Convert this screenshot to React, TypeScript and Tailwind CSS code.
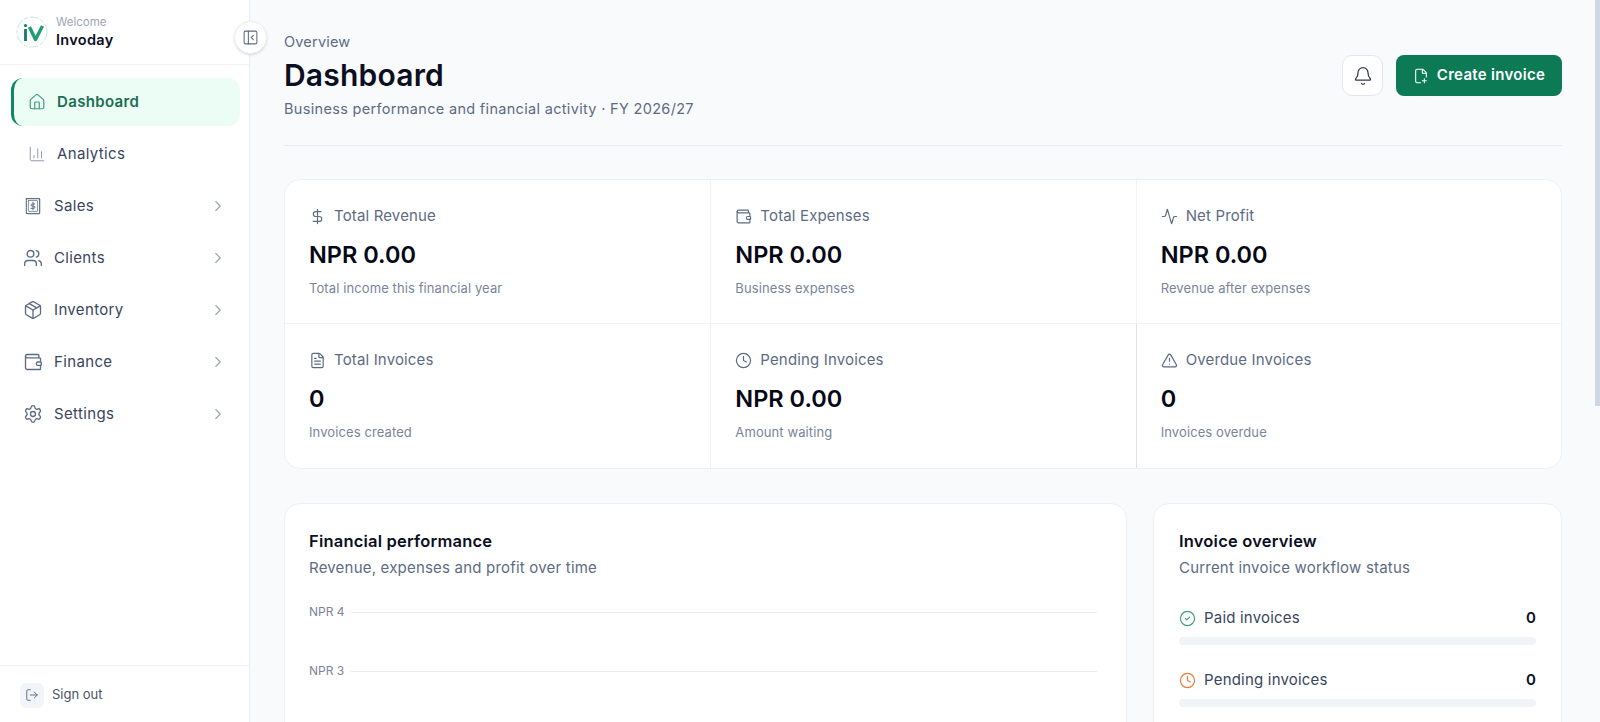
import React from "react";
import {
  Activity,
  Bell,
  ChartColumn,
  ChevronRight,
  CircleCheck,
  Clock,
  DollarSign,
  FilePlusCorner,
  FileText,
  House,
  LogOut,
  Package,
  PanelLeftClose,
  Settings,
  TriangleAlert,
  Users,
  Wallet,
} from "lucide-react";

const SalesIcon = () => (
  <svg width="20" height="20" viewBox="0 0 24 24" fill="none" stroke="currentColor" strokeWidth="1.5" strokeLinecap="round" strokeLinejoin="round">
    <rect x="4" y="3" width="16" height="18" rx="0.5" strokeDasharray="1.6 1.1" />
    <rect x="6.5" y="5.5" width="11" height="13" rx="0.5" strokeWidth="0.9" />
    <path strokeWidth="1.2" d="M12 7.5v9M14.2 9.6h-3.2a1.3 1.3 0 0 0 0 2.6h2a1.3 1.3 0 0 1 0 2.6H9.6" />
  </svg>
);

const Logo = () => (
  <svg width="32" height="32" viewBox="0 0 32 32" fill="none">
    <circle cx="16" cy="16" r="15" stroke="#b5e0d0" strokeWidth="0.8" strokeDasharray="9 2 4 2" />
    <circle cx="9.5" cy="9.5" r="1.6" fill="#0f7a6a" />
    <path d="M9.5 13v12" stroke="#0f7a6a" strokeWidth="2.8" />
    <path d="M13.5 11l6 12.5 7-13.5" stroke="#1f9f70" strokeWidth="3.4" strokeLinejoin="round" />
  </svg>
);

const navItems = [
  { label: "Sales", icon: <SalesIcon /> },
  { label: "Clients", icon: <Users size={20} strokeWidth={1.6} /> },
  { label: "Inventory", icon: <Package size={20} strokeWidth={1.6} /> },
  { label: "Finance", icon: <Wallet size={20} strokeWidth={1.6} /> },
  { label: "Settings", icon: <Settings size={20} strokeWidth={1.6} /> },
];

const stats = [
  { label: "Total Revenue", value: "NPR 0.00", note: "Total income this financial year", icon: <DollarSign size={17} strokeWidth={1.7} /> },
  { label: "Total Expenses", value: "NPR 0.00", note: "Business expenses", icon: <Wallet size={17} strokeWidth={1.7} /> },
  { label: "Net Profit", value: "NPR 0.00", note: "Revenue after expenses", icon: <Activity size={17} strokeWidth={1.7} /> },
  { label: "Total Invoices", value: "0", note: "Invoices created", icon: <FileText size={17} strokeWidth={1.7} /> },
  { label: "Pending Invoices", value: "NPR 0.00", note: "Amount waiting", icon: <Clock size={17} strokeWidth={1.7} /> },
  { label: "Overdue Invoices", value: "0", note: "Invoices overdue", icon: <TriangleAlert size={17} strokeWidth={1.7} /> },
];

const statuses = [
  { label: "Paid invoices", icon: <CircleCheck size={17} strokeWidth={1.7} className="text-[#3f9f7a]" /> },
  { label: "Pending invoices", icon: <Clock size={17} strokeWidth={1.7} className="text-[#ea7b3c]" /> },
];

export default function App() {
  return (
    <div className="flex h-[722px] overflow-hidden bg-[#f9fafc] font-['Inter','Liberation_Sans',sans-serif] text-[#3a4560]">
      {/* Sidebar */}
      <aside className="relative flex w-[250px] shrink-0 flex-col border-r border-[#eceef2] bg-white">
        <div className="flex h-[65px] shrink-0 items-center gap-[8px] border-b border-[#f1f2f5] pl-[16px]">
          <Logo />
          <div className="flex flex-col">
            <span className="text-[11.5px] leading-[16px] text-[#a0a5bd]">Welcome</span>
            <span className="text-[14.5px] leading-[20px] font-semibold tracking-[0.3px] text-[#0b0f1f]">Invoday</span>
          </div>
        </div>
        <button className="absolute top-[21px] left-[234px] z-10 flex h-[33px] w-[33px] items-center justify-center rounded-full border border-[#eceef2] bg-white text-[#5d6b85] shadow-sm">
          <PanelLeftClose size={17} strokeWidth={1.5} />
        </button>

        <nav className="flex flex-1 flex-col gap-[4px] pt-[13px] pr-[9px] pl-[11px]">
          <div className="flex h-[48px] items-center gap-[11px] rounded-xl border-l-[3px] border-[#0f8a60] bg-[#ecfdf5] pl-[14px] text-[15px] font-semibold tracking-[0.35px] text-[#1c6e52]">
            <House size={18} strokeWidth={1.6} className="text-[#3f9f7a]" />
            Dashboard
          </div>
          <div className="flex h-[48px] items-center gap-[11px] pl-[17px] text-[15px] tracking-[0.35px] text-[#3a4560]">
            <ChartColumn size={18} strokeWidth={1.3} className="text-[#8f97b0]" />
            Analytics
          </div>
          {navItems.map((item) => (
            <div key={item.label} className="flex h-[48px] items-center gap-[11px] pr-[13px] pl-[12px] text-[15px] tracking-[0.35px] text-[#3a4560]">
              <span className="text-[#5d6b85]">{item.icon}</span>
              <span className="flex-1">{item.label}</span>
              <ChevronRight size={18} strokeWidth={1.5} className="text-[#98a1b3]" />
            </div>
          ))}
        </nav>

        <div className="flex h-[57px] shrink-0 items-center gap-[8px] border-t border-[#f1f2f5] pt-[2px] pl-[20px]">
          <span className="flex h-[25px] w-[24px] items-center justify-center rounded-md bg-[#f1f4f8] text-[#5d6b85]">
            <LogOut size={14} strokeWidth={1.6} />
          </span>
          <span className="text-[13px] text-[#4b5568]">Sign out</span>
        </div>
      </aside>

      {/* Main */}
      <main className="relative h-full flex-1 overflow-hidden">
        <div className="absolute top-0 right-0 h-[406px] w-[5px] bg-[#cfd6e4]" />
        <div className="pt-[33px] pr-[38px] pl-[34px]">
          <header className="flex items-start justify-between border-b border-[#e9ebf0] pb-[26px]">
            <div className="flex flex-col">
              <span className="text-[14.5px] leading-[18px] tracking-[0.2px] text-[#5d6b85]">Overview</span>
              <h1 className="mt-[4px] text-[30px] leading-[40px] font-semibold tracking-[0.2px] text-[#0b0f1f]">Dashboard</h1>
              <p className="mt-[4px] text-[14.5px] leading-[20px] tracking-[0.32px] text-[#5d6b85]">Business performance and financial activity · FY 2026/27</p>
            </div>
            <div className="mt-[22px] flex items-center gap-[13px]">
              <button className="flex h-[41px] w-[41px] items-center justify-center rounded-[10px] border border-[#e3e6ec] bg-white text-[#2f3a52]">
                <Bell size={20} strokeWidth={1.5} />
              </button>
              <button className="flex h-[41px] w-[166px] items-center justify-center gap-[8px] rounded-[8px] bg-[#0b7a55] text-[15px] font-semibold tracking-[0.3px] text-white">
                <FilePlusCorner size={16} strokeWidth={1.6} />
                Create invoice
              </button>
            </div>
          </header>

          <section className="mt-[33px] grid grid-cols-3 overflow-hidden rounded-2xl border border-[#eef0f4] bg-white">
            {stats.map((s, i) => (
              <div
                key={s.label}
                className={`flex h-[144px] flex-col pt-[26px] pl-[24px] ${i < 3 ? "border-b border-[#f1f3f6]" : ""} ${i % 3 === 0 ? "" : i % 3 === 1 ? "border-l border-[#edf0f4]" : "border-l border-[#dde1e8]"}`}
              >
                <div className="flex items-center gap-[8px] text-[15px] leading-[20px] tracking-[0.15px] text-[#5d6b85]">
                  {s.icon}
                  {s.label}
                </div>
                <div className="mt-[13px] text-[23.5px] leading-[32px] font-semibold text-[#050816]">{s.value}</div>
                <div className="mt-[8px] text-[13px] leading-[18px] tracking-[0.1px] text-[#7a8599]">{s.note}</div>
              </div>
            ))}
          </section>

          <section className="mt-[34px] flex items-start gap-[26px]">
            <div className="h-[500px] flex-1 rounded-2xl border border-[#eef0f4] bg-white pt-[25px] pr-[29px] pl-[24px]">
              <h2 className="text-[16.5px] leading-[24px] font-semibold tracking-[0.2px] text-[#0b0f1f]">Financial performance</h2>
              <p className="mt-[4px] text-[15px] leading-[22px] tracking-[0.2px] text-[#5d6b85]">Revenue, expenses and profit over time</p>
              <div className="mt-[24px] flex flex-col gap-[41px]">
                {["NPR 4", "NPR 3"].map((t) => (
                  <div key={t} className="flex h-[18px] items-center gap-[7px]">
                    <span className="w-[35px] text-right text-[12px] whitespace-nowrap text-[#7a8599]">{t}</span>
                    <span className="h-px flex-1 bg-[#e9ebf0]" />
                  </div>
                ))}
              </div>
            </div>

            <div className="h-[500px] w-[409px] shrink-0 rounded-2xl border border-[#eef0f4] bg-white pt-[25px] pr-[25px] pl-[25px]">
              <h2 className="text-[16.5px] leading-[24px] font-semibold tracking-[0.2px] text-[#0b0f1f]">Invoice overview</h2>
              <p className="mt-[4px] text-[15px] leading-[22px] tracking-[0.2px] text-[#5d6b85]">Current invoice workflow status</p>
              <div className="mt-[29px] flex flex-col gap-[25px]">
                {statuses.map((s) => (
                  <div key={s.label} className="flex flex-col gap-[9px]">
                    <div className="flex h-[20px] items-center gap-[8px] text-[15px] tracking-[0.2px] text-[#3a4560]">
                      {s.icon}
                      <span className="flex-1">{s.label}</span>
                      <span className="font-semibold text-[#0b0f1f]">0</span>
                    </div>
                    <div className="h-[8px] rounded-full bg-[#f1f3f6]" />
                  </div>
                ))}
              </div>
            </div>
          </section>
        </div>
      </main>
    </div>
  );
}
